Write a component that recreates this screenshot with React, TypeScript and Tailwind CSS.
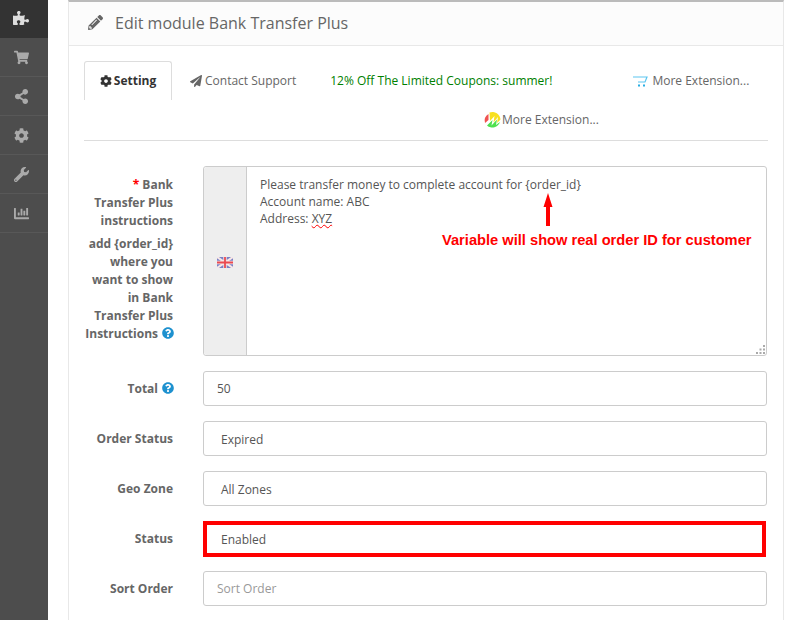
import React from "react";
import { FaPuzzlePiece, FaShoppingCart, FaShareAlt, FaCog, FaWrench, FaChartBar, FaPencilAlt, FaPaperPlane, FaQuestionCircle } from "react-icons/fa";

const Help = () => <FaQuestionCircle className="inline-block text-[#1e91cf] text-[12px] ml-1 -mr-[1px] align-[-1px]" />;

function Field({ label, children }: { label: React.ReactNode; children: React.ReactNode }) {
  return (
    <div className="flex items-start gap-[30px] mb-[15px]">
      <div className="w-[89px] shrink-0 text-right font-bold text-[12px] leading-[18px] text-[#666] pt-[9px]">{label}</div>
      <div className="flex-1 min-w-0">{children}</div>
    </div>
  );
}

const boxClass = "h-[35px] mr-[1px] rounded-[3px] border border-[#ccc] bg-white flex items-center text-[12px] text-[#555]";

export default function App() {
  const icons = [FaShoppingCart, FaShareAlt, FaCog, FaWrench, FaChartBar];
  return (
    <div className="flex h-[620px] w-[800px] overflow-hidden bg-white font-['Open_Sans',sans-serif]">
      <aside className="w-[48px] shrink-0 bg-[#4d4d4d]">
        <div className="h-[38px] bg-[#333] flex items-center justify-center pr-[6px] pb-[2px] text-[#ddd] text-[16px]"><FaPuzzlePiece /></div>
        {icons.map((I, i) => (
          <div key={i} className="h-[39px] border-b border-[#585858] flex items-center justify-center pr-[6px] text-[#aaa] text-[15px]"><I /></div>
        ))}
      </aside>
      <main className="ml-[20px] w-[716px] h-[640px] border-x border-[#e8e8e8] border-t-2 border-t-[#bbb] shrink-0">
        <div className="h-[44px] bg-[#fcfcfc] border-b border-[#e8e8e8] flex items-center pl-[19px] pb-[2px] text-[#666]">
          <FaPencilAlt className="text-[15px] mr-[12px]" />
          <h1 className="text-[16px] font-normal">Edit module Bank Transfer Plus</h1>
        </div>
        <div className="pl-[15px] pr-[15px] pt-[15px]">
          <div className="border-b border-[#ddd] h-[80px] mb-[25px] text-[12px]">
            <div className="flex items-center h-[39px]">
              <div className="w-[88px] h-[39px] border border-[#ddd] border-b-0 rounded-t-[3px] flex items-center justify-center font-bold text-[#333]">
                <FaCog className="text-[12px] mr-[2px]" />Setting
              </div>
              <div className="ml-[18px] flex items-center text-[#666]"><FaPaperPlane className="text-[12px] mr-[3px]" />Contact Support</div>
              <div className="ml-[34px] text-[#008000]">12% Off The Limited Coupons: summer!</div>
              <div className="ml-[81px] flex items-center text-[#666]">
                <svg width="15" height="13" viewBox="0 0 15 13" className="mr-[4px]" fill="none">
                  <path d="M0 3h14l-2 5H5" stroke="#5cc6f0" strokeWidth="1.2" />
                  <rect x="5" y="10.5" width="2" height="2" fill="#29aee3" /><rect x="10" y="10.5" width="2" height="2" fill="#29aee3" />
                </svg>
                More Extension...
              </div>
            </div>
            <div className="flex items-center ml-[399px] mt-[9px] h-[22px] text-[#666]">
              <svg width="19" height="18" viewBox="0 0 18 18" fill="none">
                <path d="M1.5 12A8 8 0 0 1 5 3L5 9z" fill="#ef5350" />
                <path d="M6 1.6A8 8 0 0 1 17 8.5L13.5 12 14.5 6 10 11.5 11 5 6.5 10z" fill="#f8e020" />
                <path d="M3.5 14.5L9 9 8 14.5 13.5 8.5 12.5 14 16.5 11A8 8 0 0 1 3.5 14.5z" fill="#4ee04e" />
              </svg>
              More Extension...
            </div>
          </div>

          <Field label={<div className="mt-[1px]"><span className="text-[#f00]">* </span>Bank Transfer Plus instructions<div className="mt-[5px]">add {"{order_id}"} where you want to show in Bank Transfer Plus Instructions<Help /></div></div>}>
            <div className="relative flex h-[190px] mr-[1px] rounded-[3px] border border-[#ccc] bg-white">
              <div className="w-[43px] bg-[#eee] border-r border-[#ccc] flex items-center justify-center pt-[2px] rounded-l-[3px]">
                <svg width="16" height="11" viewBox="0 0 16 11">
                  <rect width="16" height="11" fill="#7a80c4" />
                  <path d="M0 0l16 11M16 0L0 11" stroke="#f6e6e6" strokeWidth="2.2" />
                  <path d="M8 0v11M0 5.5h16" stroke="#f6e6e6" strokeWidth="3.4" />
                  <path d="M8 0v11M0 5.5h16" stroke="#ea4a50" strokeWidth="1.8" />
                </svg>
              </div>
              <div className="pl-[13px] pt-[9px] text-[12px] leading-[17px] text-[#555]">
                <div>Please transfer money to complete account for {"{order_id}"}</div>
                <div>Account name: ABC</div>
                <div>Address: <span className="underline decoration-wavy decoration-[#f00] decoration-1">XYZ</span></div>
              </div>
              <div className="absolute left-[339px] top-[26px]">
                <svg width="10" height="34" viewBox="0 0 10 34" className="block"><path d="M5 0l4.5 14H7v19H3V14H.5z" fill="#f00" /></svg>
              </div>
              <div className="absolute left-[238px] top-[65px] font-['Liberation_Sans',sans-serif] font-bold text-[14.67px] leading-[16px] text-[#f00] whitespace-nowrap">Variable will show real order ID for customer</div>
              <svg width="9" height="9" viewBox="0 0 9 9" className="absolute right-[1px] bottom-[1px]" fill="#aaa">
                <rect x="7" y="0" width="2" height="2" /><rect x="3.5" y="3.5" width="2" height="2" /><rect x="7" y="3.5" width="2" height="2" /><rect x="0" y="7" width="2" height="2" /><rect x="3.5" y="7" width="2" height="2" /><rect x="7" y="7" width="2" height="2" />
              </svg>
            </div>
          </Field>
          <Field label={<>Total<Help /></>}>
            <div className={`${boxClass} pl-[13px] pt-[1px]`}>50</div>
          </Field>
          <Field label="Order Status"><div className={`${boxClass} pl-[17px] pt-[2px]`}>Expired</div></Field>
          <Field label="Geo Zone"><div className={`${boxClass} pl-[17px] pt-[2px]`}>All Zones</div></Field>
          <Field label="Status"><div className="h-[36px] -mb-[1px] mr-[2px] border-4 border-[#f00] bg-white flex items-center pl-[14px] pt-[1px] text-[12px] text-[#555]">Enabled</div></Field>
          <Field label="Sort Order"><div className={`${boxClass} pl-[13px] text-[#999]`}>Sort Order</div></Field>
        </div>
      </main>
    </div>
  );
}
